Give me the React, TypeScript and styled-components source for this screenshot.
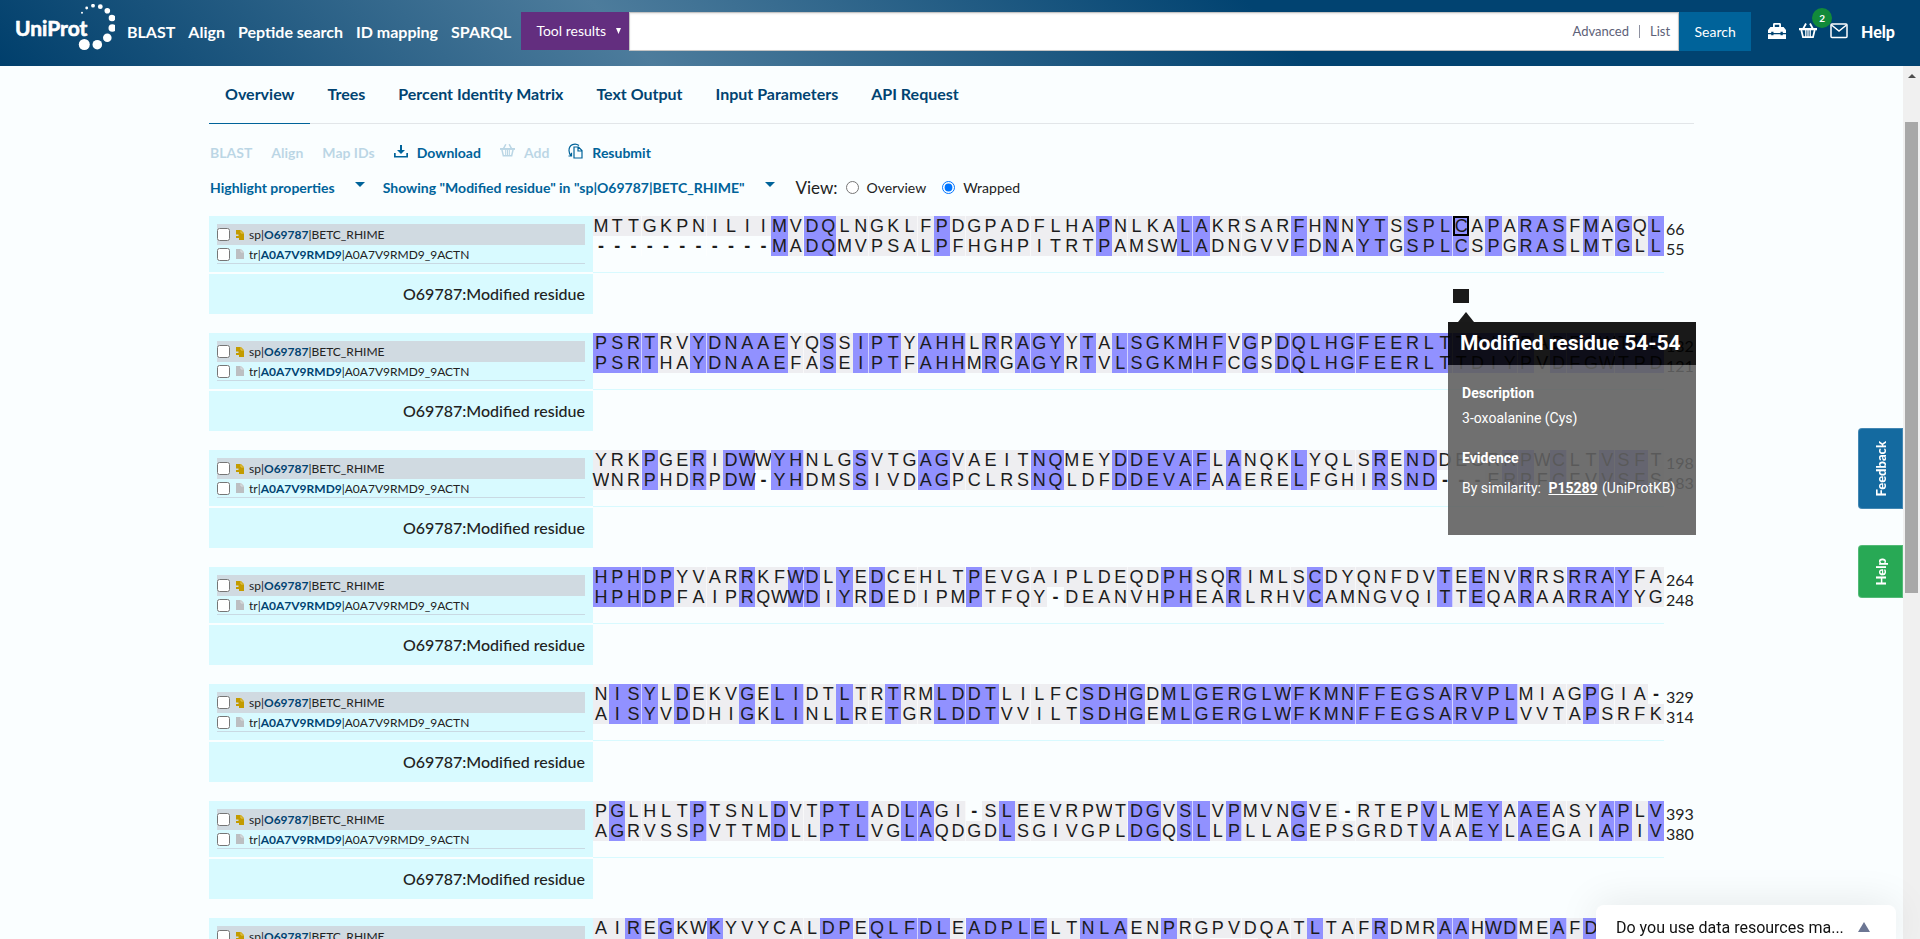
import React from "react";
import styled, { createGlobalStyle, css } from "styled-components";

const GlobalStyle = createGlobalStyle`
  *, *::before, *::after { box-sizing: border-box; }
  body {
    margin: 0;
    background: #fafeff;
    color: #222;
    font-family: Lato, "Liberation Sans", sans-serif;
    font-size: 16px;
  }
  button, input { font: inherit; }
  button { border: 0; background: none; padding: 0; cursor: pointer; }
  a { color: inherit; text-decoration: none; }
`;

const Page = styled.div`
  display: flex;
  flex-direction: column;
  height: 100vh;
  overflow: hidden;
`;

/* ---------- header ---------- */

const Header = styled.header`
  display: flex;
  align-items: center;
  flex: none;
  height: 66px;
  padding: 0 25px 4px 15px;
  color: #fff;
  background: linear-gradient(45deg, #003f6c 0%, #4d7c9c 33%, #014371 66%);
`;

const LogoLink = styled.a`
  display: block;
  height: 54px;
  margin-right: 12px;
`;

const Nav = styled.nav`
  display: flex;
  gap: 13px;
  margin-right: 10px;
  font-weight: 700;
  white-space: nowrap;
`;

const SearchForm = styled.form`
  display: flex;
  flex: 1;
  height: 39px;
  margin-right: 17px;
`;

const Namespace = styled.button`
  display: flex;
  align-items: center;
  justify-content: space-between;
  width: 108px;
  height: 38px;
  padding: 0 8px 0 15px;
  color: #fff;
  font-size: 14px;
  background: #632e7f;
`;

const SearchField = styled.div`
  display: flex;
  align-items: center;
  flex: 1;
  gap: 10px;
  padding-right: 8px;
  border: 1px solid #c4c4c4;
  box-shadow: inset 0 1px 2px rgba(10, 10, 10, 0.1);
  background: #fff;
  color: #5d6178;
  font-size: 13px;
`;

const SearchInput = styled.input`
  flex: 1;
  min-width: 0;
  height: 100%;
  padding: 0 8px;
  border: 0;
  outline: 0;
  background: transparent;
`;

const FieldDivider = styled.span`
  width: 1px;
  height: 13px;
  background: #8d90a0;
`;

const SearchButton = styled.button`
  width: 72px;
  color: #fff;
  font-size: 14px;
  background: #00639a;
`;

const HeaderIcons = styled.div`
  display: flex;
  align-items: center;
  gap: 13px;
  font-weight: 700;
`;

const IconLink = styled.a`
  position: relative;
  display: block;
  width: 18px;
  height: 18px;
`;

const HelpLink = styled.a`
  font-weight: 900;
`;

const Badge = styled.span`
  position: absolute;
  top: -14px;
  left: 13px;
  width: 20px;
  height: 20px;
  border-radius: 50%;
  background: #128a3a;
  font-size: 10px;
  line-height: 20px;
  text-align: center;
`;

/* ---------- body ---------- */

const Body = styled.div`
  display: flex;
  flex: 1;
  min-height: 0;
`;

const Main = styled.main`
  flex: 1;
  min-width: 0;
  overflow: hidden;
  padding: 0 209px;
`;

const Scrollbar = styled.div`
  display: flex;
  flex-direction: column;
  align-items: center;
  width: 17px;
  background: #f0f0f0;
`;

const ScrollArrow = styled.span`
  margin: 8px 0 44px;
  border: solid transparent;
  border-width: 0 4px 4px;
  border-bottom-color: #4d4d4d;
`;

const ScrollThumb = styled.span`
  width: 13px;
  height: 54%;
  background: #a8a8a8;
`;

const Tabs = styled.div`
  display: flex;
  gap: 1px;
  height: 58px;
  border-bottom: 1px solid #e2e6e9;
`;

const Tab = styled.button<{ $active?: boolean }>`
  margin-bottom: -1px;
  padding: 0 16px 3px;
  border-bottom: 1px solid ${(p) => (p.$active ? "#00639a" : "transparent")};
  color: #014371;
  font-weight: 700;
`;

const Toolbar = styled.div`
  display: flex;
  align-items: center;
  gap: 19px;
  height: 36px;
  margin-top: 10px;
  padding-left: 1px;
  color: #00639a;
  font-size: 14px;
`;

const ToolButton = styled.button`
  display: flex;
  align-items: center;
  gap: 9px;
  color: #00639a;
  font-weight: 700;
  &:disabled { opacity: 0.25; }
  svg { margin-top: -3px; }
`;

const Filters = styled.div`
  display: flex;
  align-items: center;
  gap: 18px;
  height: 34px;
  padding-left: 1px;
  font-size: 14px;
`;

const DropButton = styled.button`
  display: flex;
  gap: 20px;
  color: #00639a;
  font-weight: 700;
`;

const Caret = styled.span`
  height: 0;
  margin-top: 3px;
  border: solid transparent;
  border-width: 5px 5px 0;
  border-top-color: #00639a;
`;

const ViewGroup = styled.fieldset`
  display: flex;
  align-items: center;
  margin: 0 0 0 3px;
  padding: 0;
  border: 0;
`;

const ViewTitle = styled.span`
  margin-right: 8px;
  font-size: 17px;
`;

const RadioLabel = styled.label`
  display: flex;
  align-items: center;
  gap: 8px;
  margin-right: 16px;
  input { width: 13px; height: 13px; margin: 0; }
`;

/* ---------- alignment ---------- */

const Blocks = styled.div`
  margin-top: 12px;
`;

const Block = styled.section`
  display: grid;
  grid-template-columns: 384px minmax(0, 1fr) 30px;
  grid-template-rows: 56px 40px;
  row-gap: 2px;
  margin-bottom: 19px;
`;

const Names = styled.div`
  padding: 8px;
  background: #d8faff;
`;

const NameRow = styled.label<{ $active?: boolean }>`
  display: flex;
  align-items: center;
  height: ${(p) => (p.$active ? 21 : 19)}px;
  font-size: 12px;
  background: ${(p) => (p.$active ? "#d0dae1" : "transparent")};
  ${(p) =>
    !p.$active &&
    css`
      border-bottom: 1px solid #c9d9e3;
    `}
  input { width: 13px; height: 13px; margin: 0 6px 0 0; }
  svg { margin-right: 5px; }
`;

const Accession = styled.a`
  color: #014371;
  font-weight: 700;
`;

const TrackName = styled.div`
  padding-right: 8px;
  background: #d8faff;
  font-weight: 500;
  line-height: 40px;
  text-align: right;
  color: #222;
`;

const Sequences = styled.div`
  height: 57px;
  border-bottom: 1px solid #d8faff;
`;

const ResidueRow = styled.div`
  display: grid;
  grid-template-columns: repeat(66, minmax(0, 1fr));
  height: 20px;
  font-family: "Liberation Sans", Arial, sans-serif;
  font-size: 18px;
  line-height: 21px;
  text-align: center;
  color: #1c1c1c;
`;

type Kind = "same" | "other" | "gap";
const fills: Record<Kind, string> = { same: "#9191ff", other: "#eeeef1", gap: "transparent" };

const Residue = styled.span<{ $kind: Kind; $selected?: boolean }>`
  display: flex;
  justify-content: center;
  height: 20px;
  background: ${(p) => fills[p.$kind]};
  ${(p) => p.$kind === "gap" && "font-weight: 700;"}
  &:nth-child(10n + 3), &:nth-child(10n + 7), &:nth-child(20n) {
    box-shadow: inset -1px 0 rgba(255, 255, 255, 0.6);
  }
  ${(p) => p.$selected && "&& { box-shadow: inset 0 0 0 2px #000; }"}
`;

const Positions = styled.div`
  padding: 3px 0 0 2px;
  line-height: 20px;
`;

const FeatureTrack = styled.div`
  display: grid;
  grid-template-columns: repeat(66, minmax(0, 1fr));
  align-items: start;
  padding-top: 15px;
`;

const Feature = styled.div<{ $start: number }>`
  position: relative;
  grid-column: ${(p) => p.$start};
  height: 14px;
  background: #1a1a1a;
`;

const Tooltip = styled.div`
  position: absolute;
  z-index: 2;
  top: 33px;
  left: -5px;
  width: 248px;
  color: #fff;
  font-family: Roboto, sans-serif;
  font-size: 14px;
  &::before {
    content: "";
    position: absolute;
    top: -10px;
    left: 10px;
    border: solid transparent;
    border-width: 0 8px 10px;
    border-bottom-color: #1a1a1a;
  }
`;

const TooltipTitle = styled.h4`
  margin: 0;
  padding: 0 12px;
  background: rgba(0, 0, 0, 0.9);
  font-size: 21px;
  font-weight: 700;
  line-height: 43px;
  white-space: nowrap;
`;

const TooltipBody = styled.div`
  height: 170px;
  padding: 18px 14px;
  background: rgba(97, 97, 97, 0.9);
  h5 { margin: 0; font-size: 14px; line-height: 20px; }
  p { margin: 5px 0 20px; line-height: 20px; white-space: nowrap; }
  h5 + p:last-child { margin-top: 10px; }
  a { margin: 0 1px 0 4px; font-weight: 700; text-decoration: underline; }
`;

/* ---------- floating pieces ---------- */

const SideButtons = styled.div`
  position: fixed;
  top: 428px;
  right: 17px;
  display: flex;
  flex-direction: column;
  gap: 36px;
`;

const SideButton = styled.button<{ $color: string; $height: number }>`
  display: flex;
  align-items: center;
  justify-content: center;
  width: 45px;
  height: ${(p) => p.$height}px;
  border: 1px solid rgba(255, 255, 255, 0.2);
  border-radius: 4px 0 0 4px;
  background: ${(p) => p.$color};
  color: #fff;
  font-size: 13px;
  font-weight: 900;
  span { writing-mode: vertical-rl; transform: rotate(180deg); }
`;

const Survey = styled.button`
  position: fixed;
  z-index: 3;
  right: 24px;
  bottom: 0;
  display: flex;
  align-items: center;
  justify-content: space-between;
  width: 300px;
  height: 34px;
  padding: 10px 26px 0 20px;
  border-radius: 8px 8px 0 0;
  background: #fff;
  box-shadow: 0 0 40px rgba(0, 0, 0, 0.1);
  color: #111;
  font-family: Roboto, sans-serif;
  font-size: 16px;
`;

const SurveyArrow = styled.span`
  border: solid transparent;
  border-width: 0 6px 10px;
  border-bottom-color: #6c7693;
`;

const dots = [
  [82, 12.7, 1], [86.7, 8, 1.4], [93, 5.7, 1.9], [100.3, 6.7, 2.4], [107.3, 10.7, 2.8],
  [112, 18, 3.3], [112.3, 28, 3.8], [107.3, 37.7, 4.3], [97.3, 44.7, 4.8], [84.3, 44.5, 5.5],
];

const Logo = () => (
  <svg width="100" height="54" viewBox="15 4 100 54" fill="#fff" aria-label="UniProt">
    <text
      x="15"
      y="36"
      fontFamily="Lato, sans-serif"
      fontSize="21"
      fontWeight="700"
      stroke="#fff"
      strokeWidth=".6"
      strokeLinejoin="round"
    >
      UniProt
    </text>
    {dots.map(([x, y, r]) => <circle key={x + y} cx={x} cy={y} r={r} />)}
  </svg>
);

const ToolboxIcon = () => (
  <svg width="18" height="18" viewBox="0 0 18 18" fill="#fff">
    <path d="M5 5V2.4Q5 1 6.4 1h5.2Q13 1 13 2.4V5h2.6L18 8v3h-3.200V9.800h-2.300V11h-7V9.800H3.200V11H0V8l2.400-3zm1.800 0h4.400V2.800H6.800zM0 12.200h3.200v1h2.300v-1h7v1h2.300v-1H18V17H0z" />
  </svg>
);

const BasketIcon = ({ size = 18, color = "#fff" }: { size?: number; color?: string }) => (
  <svg width={size} height={size} viewBox="0 0 18 18" fill="none" stroke={color}>
    <path d="M4 7 7 1.500M14 7l-3-5.500" strokeWidth="1.800" />
    <path d="M0 6h18v2.300H0z" fill={color} stroke="none" />
    <path d="M2.300 8 4 15.200h10L15.700 8" strokeWidth="1.800" />
    <path d="M6.800 8v7M9 8v7M11.200 8v7" strokeWidth="1.300" />
  </svg>
);

const MailIcon = () => (
  <svg width="18" height="18" viewBox="0 0 18 18" fill="none" stroke="#fff" strokeWidth="1.500">
    <rect x="1" y="2" width="16" height="13.500" rx="1" />
    <path d="m1.500 3 7.500 6 7.500-6" />
  </svg>
);

const DownloadIcon = () => (
  <svg width="14" height="14" viewBox="0 0 14 14" fill="#00639a">
    <path d="M6 1h2v5h3L7 10 3 6h3zM0 9h1.700v3h10.600V9H14v4.500H0z" />
  </svg>
);

const ResubmitIcon = () => (
  <svg width="15" height="16" viewBox="0 0 15 16" fill="none" stroke="#00639a" strokeWidth="1.200">
    <path d="M6 4h4.500L14 7.500V15H6zM10 4v4h4" />
    <path d="M11 2.500C7-.5 1 1.500 1 7.500c0 2 .8 4 2.200 5.500M.5 13h3V9.700" />
  </svg>
);

const EntryIcon = ({ reviewed }: { reviewed?: boolean }) =>
  reviewed ? (
    <svg width="8" height="10" viewBox="0 0 8 10" fill="#c39b00">
      <path d="M0 0h5l3 3v7H3V8H0V6h2.500V4.500H0z" />
      <path d="M5 0v3h3" fill="none" stroke="#e9cf6b" strokeWidth=".8" />
    </svg>
  ) : (
    <svg width="8" height="10" viewBox="0 0 8 10" fill="#bcbfc2">
      <path d="M0 0h5l3 3v7H0z" />
      <path d="M5 0v3h3" fill="none" stroke="#e3e8ea" strokeWidth=".8" />
    </svg>
  );

interface AlignmentBlock {
  rows: [string, string];
  ends: [number, number];
  feature?: number;
}

const blocks: AlignmentBlock[] = [
  {
    rows: [
      "MTTGKPNILIIMVDQLNGKLFPDGPADFLHAPNLKALAKRSARFHNNYTSSPLCAPARASFMAGQL",
      "-----------MADQMVPSALPFHGHPITRTPAMSWLADNGVVFDNAYTGSPLCSPGRASLMTGLL",
    ],
    ends: [66, 55],
    feature: 54,
  },
  {
    rows: [
      "PSRTRVYDNAAEYQSSIPTYAHHLRRAGYYTALSGKMHFVGPDQLHGFEERLTTDIYPADFGWTPD",
      "PSRTHAYDNAAEFASEIPTFAHHMRGAGYRTVLSGKMHFCGSDQLHGFEERLTTDIYPVDFGWTPD",
    ],
    ends: [132, 121],
  },
  {
    rows: [
      "YRKPGERIDWWYHNLGSVTGAGVAEITNQMEYDDEVAFLANQKLYQLSRENDDEGRRPWCLTVSFT",
      "WNRPHDRPDW-YHDMSSIVDAGPCLRSNQLDFDDEVAFAAERELFGHIRSND---ERPFCFVVSFS",
    ],
    ends: [198, 183],
  },
  {
    rows: [
      "HPHDPYVARRKFWDLYEDCEHLTPEVGAIPLDEQDPHSQRIMLSCDYQNFDVTEENVRRSRRAYFA",
      "HPHDPFAIPRQWWDIYRDEDIPMPTFQY-DEANVHPHEARLRHVCAMNGVQITTEQARAARRAYYG",
    ],
    ends: [264, 248],
  },
  {
    rows: [
      "NISYLDEKVGELIDTLTRTRMLDDTLILFCSDHGDMLGERGLWFKMNFFEGSARVPLMIAGPGIA-",
      "AISYVDDHIGKLINLLRETGRLDDTVVILTSDHGEMLGERGLWFKMNFFEGSARVPLVVTAPSRFK",
    ],
    ends: [329, 314],
  },
  {
    rows: [
      "PGLHLTPTSNLDVTPTLADLAGI-SLEEVRPWTDGVSLVPMVNGVE-RTEPVLMEYAAEASYAPLV",
      "AGRVSSPVTTMDLLPTLVGLAQDGDLSGIVGPLDGQSLLPLLAGEPSGRDTVAAEYLAEGAIAPIV",
    ],
    ends: [393, 380],
  },
  {
    rows: [
      "AIREGKWKYVYCALDPEQLFDLEADPLELTNLAENPRGPVDQATLTAFRDMRAAHWDMEAFDADVR",
      "VVRRGRHKLIWSEVDPPQLFDLDADPLERVNLASRPEH---AGLLAEHREAVAARWDVAALDERIL",
    ],
    ends: [459, 443],
  },
];

const kindOf = (a: string, b: string): Kind => (a === "-" ? "gap" : a === b ? "same" : "other");

const AlignmentSection = ({ rows, ends, feature }: AlignmentBlock) => (
  <Block>
    <Names>
      <NameRow $active>
        <input type="checkbox" />
        <EntryIcon reviewed />
        <span>sp|<Accession href="#O69787">O69787</Accession>|BETC_RHIME</span>
      </NameRow>
      <NameRow>
        <input type="checkbox" />
        <EntryIcon />
        <span>tr|<Accession href="#A0A7V9RMD9">A0A7V9RMD9</Accession>|A0A7V9RMD9_9ACTN</span>
      </NameRow>
    </Names>
    <Sequences>
      {rows.map((row, r) => (
        <ResidueRow key={r}>
          {row.split("").map((letter, i) => (
            <Residue
              key={i}
              $kind={kindOf(letter, rows[1 - r][i])}
              $selected={r === 0 && feature === i + 1}
            >
              {letter}
            </Residue>
          ))}
        </ResidueRow>
      ))}
    </Sequences>
    <Positions>
      {ends.map((end) => <div key={end}>{end}</div>)}
    </Positions>
    <TrackName>O69787:Modified residue</TrackName>
    <FeatureTrack>
      {feature && (
        <Feature $start={feature}>
          <Tooltip role="tooltip">
            <TooltipTitle>Modified residue 54-54</TooltipTitle>
            <TooltipBody>
              <h5>Description</h5>
              <p>3-oxoalanine (Cys)</p>
              <h5>Evidence</h5>
              <p>By similarity: <a href="#P15289">P15289</a> (UniProtKB)</p>
            </TooltipBody>
          </Tooltip>
        </Feature>
      )}
    </FeatureTrack>
  </Block>
);

const navItems = ["BLAST", "Align", "Peptide search", "ID mapping", "SPARQL"];
const tabs = ["Overview", "Trees", "Percent Identity Matrix", "Text Output", "Input Parameters", "API Request"];

export default function App() {
  return (
    <Page>
      <GlobalStyle />
      <Header>
        <LogoLink href="#home"><Logo /></LogoLink>
        <Nav>
          {navItems.map((item) => <a key={item} href={`#${item}`}>{item}</a>)}
        </Nav>
        <SearchForm onSubmit={(e) => e.preventDefault()}>
          <Namespace type="button">
            Tool results
            <svg width="5" height="6" viewBox="0 0 5 6" fill="#fff"><path d="M0 0h5L2.500 6z" /></svg>
          </Namespace>
          <SearchField>
            <SearchInput type="search" aria-label="Search UniProt" />
            <a href="#advanced">Advanced</a>
            <FieldDivider />
            <a href="#list">List</a>
          </SearchField>
          <SearchButton type="submit">Search</SearchButton>
        </SearchForm>
        <HeaderIcons>
          <IconLink href="#tools" aria-label="Tool results"><ToolboxIcon /></IconLink>
          <IconLink href="#basket" aria-label="Basket"><BasketIcon /><Badge>2</Badge></IconLink>
          <IconLink href="#contact" aria-label="Contact"><MailIcon /></IconLink>
          <HelpLink href="#help">Help</HelpLink>
        </HeaderIcons>
      </Header>
      <Body>
        <Main>
          <Tabs role="tablist">
            {tabs.map((tab, i) => (
              <Tab key={tab} role="tab" aria-selected={i === 0} $active={i === 0}>{tab}</Tab>
            ))}
          </Tabs>
          <Toolbar>
            <ToolButton disabled>BLAST</ToolButton>
            <ToolButton disabled>Align</ToolButton>
            <ToolButton disabled>Map IDs</ToolButton>
            <ToolButton><DownloadIcon />Download</ToolButton>
            <ToolButton disabled><BasketIcon size={15} color="#00639a" />Add</ToolButton>
            <ToolButton><ResubmitIcon />Resubmit</ToolButton>
          </Toolbar>
          <Filters>
            <DropButton>Highlight properties<Caret /></DropButton>
            <DropButton>Showing "Modified residue" in "sp|O69787|BETC_RHIME"<Caret /></DropButton>
            <ViewGroup>
              <ViewTitle>View:</ViewTitle>
              <RadioLabel><input type="radio" name="view" />Overview</RadioLabel>
              <RadioLabel><input type="radio" name="view" defaultChecked />Wrapped</RadioLabel>
            </ViewGroup>
          </Filters>
          <Blocks>
            {blocks.map((block) => <AlignmentSection key={block.ends[0]} {...block} />)}
          </Blocks>
        </Main>
        <Scrollbar aria-hidden="true">
          <ScrollArrow />
          <ScrollThumb />
        </Scrollbar>
      </Body>
      <SideButtons>
        <SideButton $color="#146aa0" $height={81}><span>Feedback</span></SideButton>
        <SideButton $color="#28a955" $height={53}><span>Help</span></SideButton>
      </SideButtons>
      <Survey>Do you use data resources ma...<SurveyArrow /></Survey>
    </Page>
  );
}
